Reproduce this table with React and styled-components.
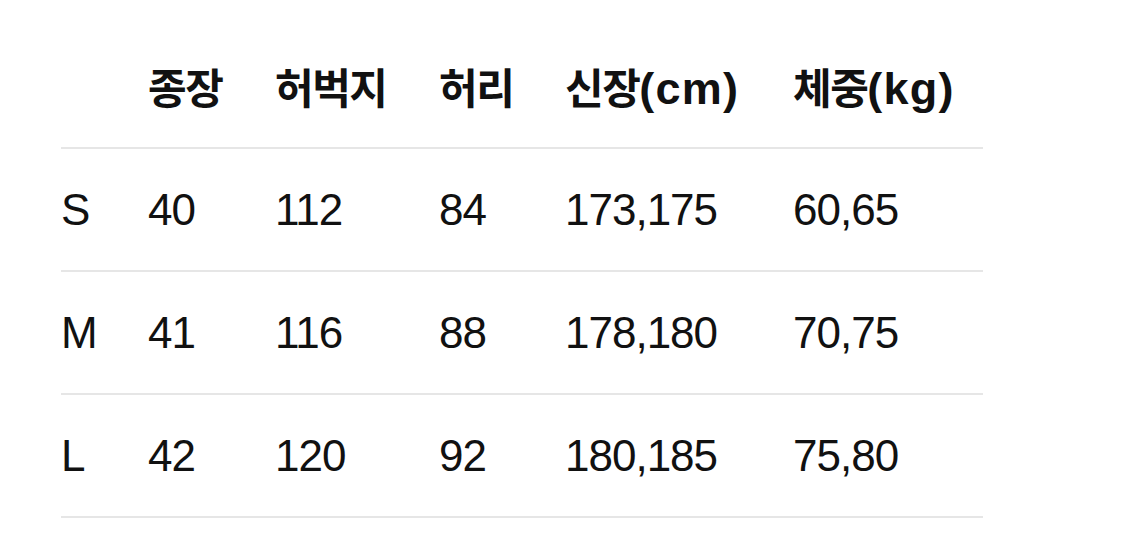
import React from "react";
import styled, { createGlobalStyle } from "styled-components";

const Global = createGlobalStyle`
  html, body { margin: 0; padding: 0; background: #fff; }
  body { font-family: "Liberation Sans", "Noto Sans CJK KR", sans-serif; color: #111; }
`;

const Table = styled.div`
  margin-left: 61px;
  width: 922px;
  padding-top: 26px;
`;

const Row = styled.div`
  display: grid;
  grid-template-columns: 87px 127px 164px 126px 228px 1fr;
  align-items: center;
  height: 121px;
  border-bottom: 2px solid #e6e6e6;
`;

const HeadCell = styled.div`
  font-family: "Liberation Sans", "Noto Sans CJK KR", sans-serif;
  font-weight: 700;
  font-size: 42px;
  white-space: nowrap;
  padding-bottom: 2px;
`;

const Hangul = styled.span`
  letter-spacing: -1.5px;
`;

const Unit = styled.span`
  font-size: 45px;
  letter-spacing: 1.2px;
`;

const Cell = styled.div`
  font-size: 44px;
  white-space: nowrap;
  letter-spacing: -1px;
`;

const headers = [
  ["", ""],
  ["종장", ""],
  ["허벅지", ""],
  ["허리", ""],
  ["신장", "(cm)"],
  ["체중", "(kg)"],
];
const rows = [
  ["S", "40", "112", "84", "173,175", "60,65"],
  ["M", "41", "116", "88", "178,180", "70,75"],
  ["L", "42", "120", "92", "180,185", "75,80"],
];

export default function App() {
  return (
    <>
      <Global />
      <Table>
        <Row>
          {headers.map(([k, u], i) => (
            <HeadCell key={i}>
              <Hangul>{k}</Hangul>
              {u && <Unit>{u}</Unit>}
            </HeadCell>
          ))}
        </Row>
        {rows.map((r) => (
          <Row key={r[0]}>
            {r.map((c, i) => (
              <Cell key={i}>{c}</Cell>
            ))}
          </Row>
        ))}
      </Table>
    </>
  );
}
